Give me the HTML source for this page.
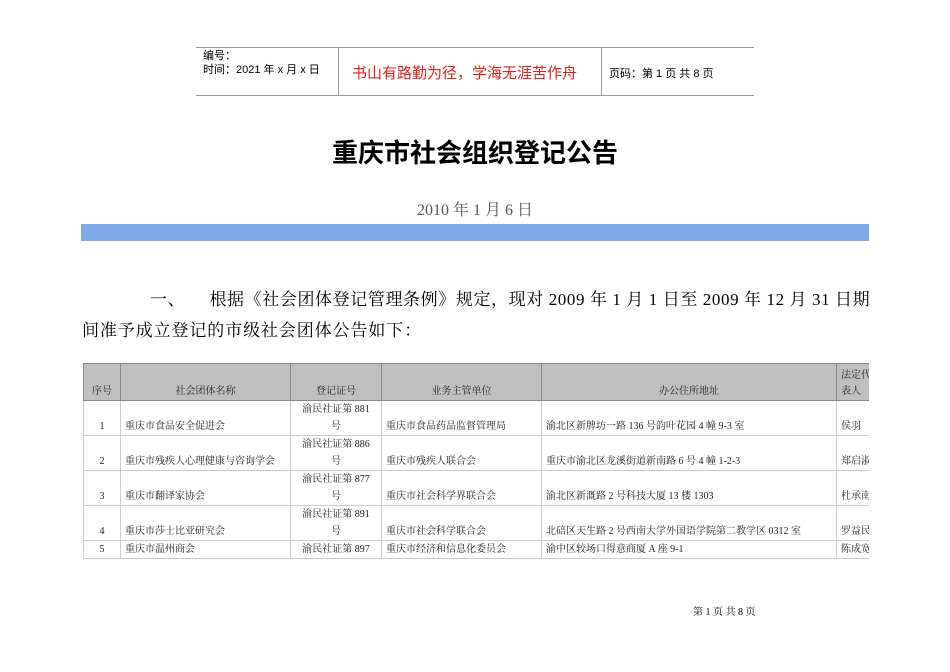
<!DOCTYPE html>
<html><head><meta charset="utf-8"><style>
body{margin:0;width:950px;height:672px;background:#fff;position:relative;overflow:hidden;font-family:"Liberation Serif","Noto Serif CJK SC",serif;color:#000}
.a{position:absolute}
.hd{font-family:"Liberation Sans","Noto Sans CJK SC",sans-serif;font-size:11px}
table{border-collapse:collapse;position:absolute;left:83px;top:363px;font-size:10px;table-layout:fixed}
td{border:1px solid #ccc;padding:0 4px;vertical-align:bottom;line-height:17px;overflow:hidden;white-space:nowrap;color:#222}
tr.h td{background:#c0c0c0;border-color:#888;height:36px;text-align:center}
.c{text-align:center}
</style></head><body>
<div class="a" style="left:196px;top:47px;width:558px;height:0;border-top:1px solid #999"></div>
<div class="a" style="left:196px;top:95px;width:558px;height:0;border-top:1px solid #999"></div>
<div class="a" style="left:338px;top:47px;width:0;height:48px;border-left:1px solid #999"></div>
<div class="a" style="left:601px;top:47px;width:0;height:48px;border-left:1px solid #999"></div>
<div class="a hd" style="left:203px;top:49px;line-height:14px">编号：<br>时间：2021 年 x 月 x 日</div>
<div class="a" style="left:352px;top:62px;font-size:15px;color:#e0201c;font-family:'Liberation Sans','Noto Sans CJK SC',sans-serif">书山有路勤为径，学海无涯苦作舟</div>
<div class="a hd" style="left:609px;top:65px">页码：第 1 页  共 8 页</div>
<div class="a" style="left:0;width:950px;top:133px;text-align:center;font-size:26px;font-weight:bold;font-family:'Liberation Sans','Noto Sans CJK SC',sans-serif">重庆市社会组织登记公告</div>
<div class="a" style="left:0;width:950px;top:197px;text-align:center;font-size:16px;color:#555">2010 年 1 月 6 日</div>
<div class="a" style="left:81px;top:224px;width:788px;height:17px;background:#7da9e8"></div>
<div class="a" style="left:150px;top:284px;font-size:17px;line-height:31px;white-space:nowrap;letter-spacing:0.6px">一、&nbsp;&nbsp;&nbsp;&nbsp; 根据《社会团体登记管理条例》规定，现对 2009 年 1 月 1 日至 2009 年 12 月 31 日期</div>
<div class="a" style="left:82px;top:315px;font-size:17px;line-height:31px;white-space:nowrap;letter-spacing:0.9px">间准予成立登记的市级社会团体公告如下：</div>
<table>
<colgroup><col style="width:37px"><col style="width:170px"><col style="width:91px"><col style="width:160px"><col style="width:295px"><col style="width:40px"></colgroup>
<tr class="h"><td>序号</td><td>社会团体名称</td><td>登记证号</td><td>业务主管单位</td><td>办公住所地址</td><td style="line-height:16px;text-align:left;padding:0 0 0 4px">法定代<br>表人</td></tr>
<tr><td class="c">1</td><td>重庆市食品安全促进会</td><td class="c">渝民社证第 881<br>号</td><td>重庆市食品药品监督管理局</td><td>渝北区新牌坊一路 136 号韵叶花园 4 幢 9-3 室</td><td>侯羽</td></tr>
<tr><td class="c">2</td><td>重庆市残疾人心理健康与咨询学会</td><td class="c">渝民社证第 886<br>号</td><td>重庆市残疾人联合会</td><td>重庆市渝北区龙溪街道新南路 6 号 4 幢 1-2-3</td><td>郑启淑</td></tr>
<tr><td class="c">3</td><td>重庆市翻译家协会</td><td class="c">渝民社证第 877<br>号</td><td>重庆市社会科学界联合会</td><td>渝北区新溉路 2 号科技大厦 13 楼 1303</td><td>杜承南</td></tr>
<tr><td class="c">4</td><td>重庆市莎士比亚研究会</td><td class="c">渝民社证第 891<br>号</td><td>重庆市社会科学联合会</td><td>北碚区天生路 2 号西南大学外国语学院第二教学区 0312 室</td><td>罗益民</td></tr>
<tr><td class="c">5</td><td>重庆市温州商会</td><td class="c">渝民社证第 897</td><td>重庆市经济和信息化委员会</td><td>渝中区较场口得意商厦 A 座 9-1</td><td>陈成宽</td></tr>
</table>
<div class="a" style="left:869px;top:355px;width:81px;height:220px;background:#fff"></div>
<div class="a" style="left:693px;top:603px;font-size:10px">第 1 页 共 8 页</div>
</body></html>
